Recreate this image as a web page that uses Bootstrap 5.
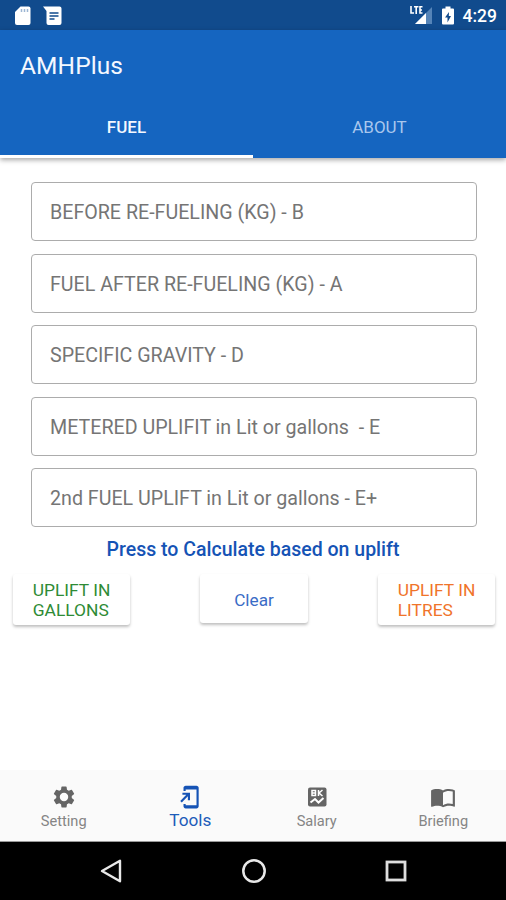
<!DOCTYPE html>
<html lang="en">
<head>
<meta charset="utf-8">
<meta name="viewport" content="width=device-width, initial-scale=1">
<title>AMHPlus</title>
<link href="https://cdn.jsdelivr.net/npm/bootstrap@5.3.0/dist/css/bootstrap.min.css" rel="stylesheet">
<style>
body{font-family:Roboto,"Liberation Sans",sans-serif;color:#757575}
svg{display:block;flex:none}
.screen{height:900px;overflow:hidden}
.status-bar{height:30px;background:#114b8d;padding:1px 9px 0 13px;color:#fff}
.clock{font-size:17.5px;line-height:28px;font-weight:500;margin-left:8px}
.app-bar{height:128px;background:#1565c0;box-shadow:0 2px 5px rgba(0,0,0,.35);z-index:1}
.app-title{height:70px;padding:1px 20px 0;font-size:24.5px;letter-spacing:.1px;font-weight:400;color:#f4f8ff}
.tabs{height:58px}
.tabs .nav-link{height:58px;padding:1px 0 0;border-radius:0;font-size:17px;font-weight:400;color:#a9c7ed;border-bottom:3px solid transparent}
.tabs .nav-link.active{color:#f4f8ff;font-weight:500;border-bottom-color:#fff}
.fields{padding:24px 29.5px 0 30.5px;gap:12.5px}
.fields .form-control{height:59px;min-height:0;border:1px solid #acacac;border-radius:4px;padding:0 19px}
.fields label{height:59px;padding:0 18.5px;line-height:59px;font-size:19.65px;color:#757575;white-space:pre}
.fields .form-control:placeholder-shown:not(:focus)~label{opacity:1}
.hint{font-size:19.5px;line-height:24px;font-weight:500;color:#1553b5;margin-top:11px}
.actions{padding:12px 11px 0 13px}
.actions .btn{background:#fff;border:0;border-radius:3px;box-shadow:0 2px 3px rgba(0,0,0,.25);font-size:17.4px;line-height:20px;padding:0}
.wide{width:117px;height:51px}
.actions .clear{width:108px;height:49px;padding-top:2px;font-size:17.2px}
.green{color:#2e8b35}.blue{color:#3a6cc6}.orange{color:#f0742a}
.bottom-nav{height:72px;background:#fafafa;border-bottom:1px solid #999}
.bottom-nav .nav-link{height:71px;padding:14px 0 0 1px;font-size:14.6px;line-height:20px;color:#858585}
.bottom-nav .nav-link.active{color:#1d5cb9;font-size:17.2px}
.bottom-nav svg{color:#656565;margin-bottom:0}
.bottom-nav .active svg{color:#1553b5;margin-bottom:-2px}
.caption{margin-top:1px}
.bottom-nav .active .caption{margin-top:2px}
.system-nav{height:58px;background:#000;padding:0 97px 0 98px}
</style>
</head>
<body>
<div class="screen d-flex flex-column bg-white">
  <div class="status-bar d-flex align-items-center">
    <svg width="20" height="22" viewBox="0 0 20 22"><path fill="#fff" d="M7.500 1.500H15.500Q17.500 1.500 17.500 3.500V18Q17.500 20 15.500 20H4Q2 20 2 18V7Z"/><path stroke="#9db6d4" stroke-width="1.500" d="M8.500 4v3M11.500 4v3M14.500 4v3"/></svg>
    <svg class="ms-2" width="24" height="22" viewBox="0 0 24 22"><path fill="#fff" d="M2 1.500H18.500Q20.500 1.500 20.500 3.500V18Q20.500 20 18.500 20H7.500Q5.500 20 5.500 18V6Z"/><path stroke="#114b8d" stroke-width="1.500" d="M8.500 8h9M8.500 11h9M8.500 14h5"/></svg>
    <div class="ms-auto d-flex align-items-center">
      <svg width="24" height="24" viewBox="0 0 24 24"><path fill="#5584b8" d="M23 3V20H6Z"/><path fill="#fff" d="M17 9V20H6Z"/><path fill="#114b8d" d="M0 0h15v11H0z"/><path fill="none" stroke="#fff" stroke-width="1.600" d="M2 2v7h3M5 2.800h4.500M7.200 2v8M13.500 2.800H11V9h2.500M11 6h2"/></svg>
      <svg class="ms-2" width="14" height="22" viewBox="0 0 14 22"><path fill="#fff" d="M4.500 1.500h5v2H12q1 0 1 1v14q0 1-1 1H2q-1 0-1-1V4.500q0-1 1-1h2.500z"/><path fill="#114b8d" d="M8 7 4 12.500h2.500v5L10 11H7.800z"/></svg>
      <span class="clock">4:29</span>
    </div>
  </div>
  <header class="app-bar position-relative">
    <h1 class="app-title d-flex align-items-center m-0">AMHPlus</h1>
    <nav class="tabs nav nav-fill">
      <a class="nav-link active w-50 d-flex align-items-center justify-content-center" href="#">FUEL</a>
      <a class="nav-link w-50 d-flex align-items-center justify-content-center" href="#">ABOUT</a>
    </nav>
  </header>
  <main class="flex-grow-1">
    <form class="fields d-flex flex-column">
      <div class="form-floating"><input class="form-control" id="before" placeholder=" "><label for="before">BEFORE RE-FUELING (KG) - B</label></div>
      <div class="form-floating"><input class="form-control" id="after" placeholder=" "><label for="after">FUEL AFTER RE-FUELING (KG) - A</label></div>
      <div class="form-floating"><input class="form-control" id="gravity" placeholder=" "><label for="gravity">SPECIFIC GRAVITY - D</label></div>
      <div class="form-floating"><input class="form-control" id="metered" placeholder=" "><label for="metered">METERED UPLIFIT in Lit or gallons  - E</label></div>
      <div class="form-floating"><input class="form-control" id="second" placeholder=" "><label for="second">2nd FUEL UPLIFT in Lit or gallons - E+</label></div>
    </form>
    <div class="hint text-center">Press to Calculate based on uplift</div>
    <div class="actions d-flex justify-content-between align-items-start">
      <button class="btn wide green"><span class="d-inline-block text-start">UPLIFT IN<br>GALLONS</span></button>
      <button class="btn clear blue">Clear</button>
      <button class="btn wide orange"><span class="d-inline-block text-start">UPLIFT IN<br>LITRES</span></button>
    </div>
  </main>
  <nav class="bottom-nav nav nav-fill flex-nowrap">
    <a class="nav-link w-25 d-flex flex-column align-items-center" href="#">
      <svg width="26" height="26" viewBox="0 0 24 24" fill="currentColor"><path fill-rule="evenodd" d="M19.140 12.940c.040-.300.060-.610.060-.940s-.020-.640-.070-.940l2.030-1.580a.490.490 0 0 0 .120-.610l-1.920-3.320a.490.490 0 0 0-.590-.220l-2.390.960a7 7 0 0 0-1.620-.940l-.360-2.540A.480.480 0 0 0 13.920 2.400h-3.840a.480.480 0 0 0-.480.410l-.360 2.540a7.400 7.400 0 0 0-1.620.940l-2.390-.960a.480.480 0 0 0-.590.220L2.720 8.870a.480.480 0 0 0 .120.610l2.030 1.580a6 6 0 0 0 0 1.880l-2.030 1.580a.490.490 0 0 0-.120.610l1.920 3.320c.120.220.370.290.590.220l2.390-.960c.500.380 1.030.700 1.620.940l.360 2.540c.050.240.240.410.480.410h3.840c.240 0 .440-.170.470-.410l.360-2.540a7 7 0 0 0 1.620-.940l2.390.960c.220.080.470 0 .590-.220l1.920-3.320a.480.480 0 0 0-.120-.610zM12 15.900a3.900 3.900 0 1 1 0-7.800 3.900 3.900 0 0 1 0 7.800z"/></svg>
      <span class="caption">Setting</span></a>
    <a class="nav-link active w-25 d-flex flex-column align-items-center" href="#">
      <svg width="26" height="26" viewBox="0 0 24 24" fill="currentColor"><path d="M18 1.510 8 1.500c-1.100 0-2 .900-2 2v3h2V5h10v14.500H8v-1H6v2c0 1.100.900 2 2 2h10c1.100 0 2-.900 2-2V3.500c0-1.100-.900-1.990-2-1.990zM10 15h2V8H5v2h3.590L3 15.590 4.410 17 10 11.410z"/></svg>
      <span class="caption">Tools</span></a>
    <a class="nav-link w-25 d-flex flex-column align-items-center" href="#">
      <svg width="26" height="26" viewBox="0 0 26 26"><rect x="4" y="3.500" width="18.500" height="19" rx="2" fill="currentColor"/><path fill="none" stroke="#fff" stroke-width="1.500" d="M8 6.500h3.500v5H8zM8 9h3.500M14.500 6v6M18.500 6l-3.500 3 3.500 3"/><path fill="none" stroke="#fff" stroke-width="2" d="M6.500 18.500l4.500-3.500 3.500 3.500 5-4.500"/></svg>
      <span class="caption">Salary</span></a>
    <a class="nav-link w-25 d-flex flex-column align-items-center" href="#">
      <svg width="26" height="26" viewBox="0 0 24 24" fill="currentColor"><path d="M21 5c-1.110-.350-2.330-.500-3.500-.500-1.950 0-4.050.400-5.500 1.500-1.450-1.100-3.550-1.500-5.500-1.500S2.450 4.900 1 6v14.650c0 .250.250.500.500.500.100 0 .150-.050.250-.050C3.100 20.450 5.050 20 6.500 20c1.950 0 4.050.400 5.500 1.500 1.350-.850 3.800-1.500 5.500-1.500 1.650 0 3.350.300 4.750 1.050.100.050.150.050.250.050.250 0 .500-.250.500-.500V6c-.600-.450-1.250-.750-2-1zm0 13.500c-1.100-.350-2.300-.500-3.500-.500-1.700 0-4.150.650-5.500 1.500V8c1.350-.850 3.800-1.500 5.500-1.500 1.200 0 2.400.150 3.500.500z"/></svg>
      <span class="caption">Briefing</span></a>
  </nav>
  <footer class="system-nav d-flex align-items-center justify-content-between">
    <svg width="26" height="26" viewBox="0 0 26 26"><path fill="none" stroke="#e8e8e8" stroke-width="2.400" stroke-linejoin="round" d="M4 13 22 2.800v20.400z"/></svg>
    <svg width="26" height="26" viewBox="0 0 26 26"><circle cx="13" cy="13" r="10.700" fill="none" stroke="#e8e8e8" stroke-width="2.500"/></svg>
    <svg width="26" height="26" viewBox="0 0 26 26"><rect x="4" y="4" width="18" height="18" fill="none" stroke="#dedede" stroke-width="2.800"/></svg>
  </footer>
</div>
<script src="https://cdn.jsdelivr.net/npm/bootstrap@5.3.0/dist/js/bootstrap.bundle.min.js"></script>
</body>
</html>
